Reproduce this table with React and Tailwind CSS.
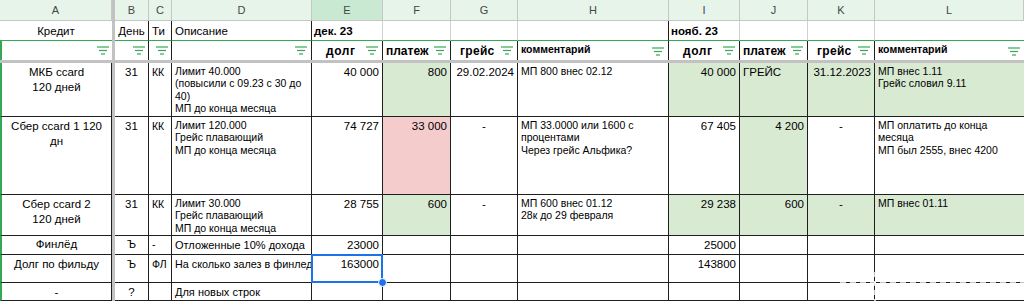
import React from "react";

const LINE = "border-[#1f1f1f]";
const GREEN = "bg-[#d9ead3]";
const PINK = "bg-[#f4cccc]";

const cols = ["A", "", "B", "C", "D", "E", "F", "G", "H", "I", "J", "K", "L"];

const FilterIcon = () => (
  <svg width="12" height="9" viewBox="0 0 12 9" className="shrink-0">
    <g stroke="#34a853" strokeWidth="1.2">
      <line x1="0" y1="1" x2="12" y2="1" />
      <line x1="2" y1="4.5" x2="10" y2="4.5" />
      <line x1="4" y1="8" x2="8" y2="8" />
    </g>
  </svg>
);

// one data cell; borders right + bottom
const Cell = ({ children, className = "" }) => (
  <div className={`border-r border-b ${LINE} px-[3px] overflow-hidden ${className}`}>{children}</div>
);

const FilterCell = ({ label, className = "", labelClass = "" }) => (
  <div className={`border-r ${LINE} flex items-center justify-between pl-[3px] pr-[4px] ${className}`}>
    <span className={`font-bold text-[12px] ${labelClass}`}>{label}</span>
    <FilterIcon />
  </div>
);

const Lines = ({ items }) => items.map((t, i) => <div key={i}>{t}</div>);

export default function App() {
  return (
    <div
      className="w-[1024px] h-[301px] overflow-hidden bg-white text-black relative"
      style={{ fontFamily: '"Liberation Sans", Arial, sans-serif' }}
    >
      <div className="grid grid-cols-[112px_3px_34px_23px_140px_71px_68px_67px_151px_71px_68px_67px_149px] grid-rows-[21px_20px_19px_3px_54px_78px_41px_19px_28px_18px] text-[11.5px] leading-[14px]">
        {/* frozen separators */}
        <div className="col-start-2 row-span-full bg-[#c2c2c2]" />
        <div className="row-start-4 col-span-full bg-[#c2c2c2]" />

        {/* column letters */}
        {cols.map((c, i) =>
          i === 1 ? null : (
            <div
              key={c}
              className={`flex items-center justify-center border-r border-b border-[#c4c7c5] text-[11px] text-[#444746] ${
                c === "E" ? "bg-[#c9e9d2]" : "bg-[#e6f4ea]"
              }`}
            >
              {c}
            </div>
          )
        )}

        {/* row 1 */}
        <div className="flex items-center justify-center border-b border-[#34a853]">Кредит</div>
        <div className={`flex items-center justify-center border-r border-b ${LINE} border-b-[#34a853]`}>День</div>
        <div className={`flex items-center pl-[3px] border-r border-b ${LINE} border-b-[#34a853]`}>Ти</div>
        <div className={`flex items-center pl-[3px] border-r border-b ${LINE} border-b-[#34a853]`}>Описание</div>
        <div className="flex items-center pl-[2px] font-bold border-r border-b border-[#d0d0d0] border-b-[#34a853]">дек. 23</div>
        <div className="border-r border-b border-[#d0d0d0] border-b-[#34a853]" />
        <div className="border-r border-b border-[#d0d0d0] border-b-[#34a853]" />
        <div className={`border-r border-b ${LINE} border-b-[#34a853]`} />
        <div className="flex items-center pl-[2px] font-bold border-r border-b border-[#d0d0d0] border-b-[#34a853]">нояб. 23</div>
        <div className="border-r border-b border-[#d0d0d0] border-b-[#34a853]" />
        <div className="border-r border-b border-[#d0d0d0] border-b-[#34a853]" />
        <div className="border-b border-[#34a853]" />

        {/* row 2: filters */}
        <div className="flex items-center justify-end pr-[3px] border-l-2 border-[#34a853]">
          <FilterIcon />
        </div>
        <div className={`flex items-center justify-end pr-[3px] border-r ${LINE}`}>
          <FilterIcon />
        </div>
        <div className={`flex items-center justify-end pr-[3px] border-r ${LINE}`}>
          <FilterIcon />
        </div>
        <div className={`flex items-center justify-end pr-[4px] border-r ${LINE}`}>
          <FilterIcon />
        </div>
        <FilterCell label="долг" className="pl-[14px]" labelClass="tracking-[0.6px]" />
        <FilterCell label="платеж" />
        <FilterCell label="грейс" className="pl-[9px]" labelClass="tracking-[0.3px]" />
        <div className={`border-r ${LINE} flex items-start justify-between pl-[3px] pr-[4px] pt-[1px]`}>
          <span className="font-bold text-[10.5px]">комментарий</span>
          <span className="mt-[5px]">
            <FilterIcon />
          </span>
        </div>
        <FilterCell label="долг" className="pl-[14px]" labelClass="tracking-[0.6px]" />
        <FilterCell label="платеж" />
        <FilterCell label="грейс" className="pl-[9px]" labelClass="tracking-[0.3px]" />
        <div className="flex items-start justify-between pl-[3px] pr-[4px] pt-[1px]">
          <span className="font-bold text-[10.5px]">комментарий</span>
          <span className="mt-[5px]">
            <FilterIcon />
          </span>
        </div>

        {/* row 3: МКБ */}
        <Cell className="border-l-2 border-l-[#34a853] text-center pt-[2px] leading-[15px]">
          <Lines items={["МКБ ccard", "120 дней"]} />
        </Cell>
        <Cell className="text-center pt-[2px]">31</Cell>
        <Cell className="pt-[2px] text-[10.5px]">КК</Cell>
        <Cell className="pt-[2px] text-[10.5px] leading-[12.3px]">
          <Lines items={["Лимит 40.000", "(повысили с 09.23 с 30 до 40)", "МП до конца месяца"]} />
        </Cell>
        <Cell className="text-right pt-[2px]">40 000</Cell>
        <Cell className={`text-right pt-[2px] ${GREEN}`}>800</Cell>
        <Cell className="text-right pt-[2px]">29.02.2024</Cell>
        <Cell className="pt-[2px] text-[10.5px] leading-[12.3px]">МП 800 внес 02.12</Cell>
        <Cell className={`text-right pt-[2px] ${GREEN}`}>40 000</Cell>
        <Cell className={`pt-[2px] ${GREEN}`}>ГРЕЙС</Cell>
        <Cell className={`text-right pt-[2px] ${GREEN}`}>31.12.2023</Cell>
        <Cell className={`border-r-0 pt-[2px] text-[10.5px] leading-[12.3px] ${GREEN}`}>
          <Lines items={["МП внес 1.11", "Грейс словил 9.11"]} />
        </Cell>

        {/* row 4: Сбер 1 */}
        <Cell className="border-l-2 border-l-[#34a853] text-center pt-[2px] leading-[15px]">
          <Lines items={["Сбер ccard 1 120", "дн"]} />
        </Cell>
        <Cell className="text-center pt-[2px]">31</Cell>
        <Cell className="pt-[2px] text-[10.5px]">КК</Cell>
        <Cell className="pt-[2px] text-[10.5px] leading-[12.3px]">
          <Lines items={["Лимит 120.000", "Грейс плавающий", "МП до конца месяца"]} />
        </Cell>
        <Cell className="text-right pt-[2px]">74 727</Cell>
        <Cell className={`text-right pt-[2px] ${PINK}`}>33 000</Cell>
        <Cell className="text-center pt-[2px]">-</Cell>
        <Cell className="pt-[2px] text-[10.5px] leading-[12.3px]">
          <Lines items={["МП 33.0000 или 1600 с процентами", "Через грейс Альфика?"]} />
        </Cell>
        <Cell className="text-right pt-[2px]">67 405</Cell>
        <Cell className={`text-right pt-[2px] ${GREEN}`}>4 200</Cell>
        <Cell className="text-center pt-[2px]">-</Cell>
        <Cell className="border-r-0 pt-[2px] text-[10.5px] leading-[12.3px]">
          <Lines items={["МП оплатить до конца месяца", "МП был 2555, внес 4200"]} />
        </Cell>

        {/* row 5: Сбер 2 */}
        <Cell className="border-l-2 border-l-[#34a853] text-center pt-[2px] leading-[15px]">
          <Lines items={["Сбер ccard 2", "120 дней"]} />
        </Cell>
        <Cell className="text-center pt-[2px]">31</Cell>
        <Cell className="pt-[2px] text-[10.5px]">КК</Cell>
        <Cell className="pt-[2px] text-[10.5px] leading-[12.3px]">
          <Lines items={["Лимит 30.000", "Грейс плавающий", "МП до конца месяца"]} />
        </Cell>
        <Cell className="text-right pt-[2px]">28 755</Cell>
        <Cell className={`text-right pt-[2px] ${GREEN}`}>600</Cell>
        <Cell className="text-center pt-[2px]">-</Cell>
        <Cell className="pt-[2px] text-[10.5px] leading-[12.3px]">
          <Lines items={["МП 600 внес 01.12", "28к до 29 февраля"]} />
        </Cell>
        <Cell className={`text-right pt-[2px] ${GREEN}`}>29 238</Cell>
        <Cell className={`text-right pt-[2px] ${GREEN}`}>600</Cell>
        <Cell className={`text-center pt-[2px] ${GREEN}`}>-</Cell>
        <Cell className={`border-r-0 pt-[2px] text-[10.5px] leading-[12.3px] ${GREEN}`}>МП внес 01.11</Cell>

        {/* row 6: Финлёд */}
        <Cell className="border-l-2 border-l-[#34a853] text-center pt-[1px]">Финлёд</Cell>
        <Cell className="text-center pt-[1px]">Ъ</Cell>
        <Cell className="pt-[1px] text-[10.5px]">-</Cell>
        <Cell className="pt-[2px] text-[11px] whitespace-nowrap">Отложенные 10% дохода</Cell>
        <Cell className="text-right pt-[2px]">23000</Cell>
        <Cell />
        <Cell />
        <Cell />
        <Cell className="text-right pt-[2px]">25000</Cell>
        <Cell />
        <Cell />
        <Cell className="border-r-0" />

        {/* row 7: Долг по фильду */}
        <Cell className="border-l-2 border-l-[#34a853] text-center pt-[2px]">Долг по фильду</Cell>
        <Cell className="text-center pt-[2px]">Ъ</Cell>
        <Cell className="pt-[2px] text-[10.5px]">ФЛ</Cell>
        <Cell className="pt-[2px] text-[10.8px] whitespace-nowrap">На сколько залез в финлед</Cell>
        <Cell className="relative overflow-visible text-right pt-[2px]">
          163000
          <div className="absolute -left-px -top-px -right-px -bottom-px border-2 border-[#1a73e8]" />
          <div className="absolute -right-[5px] -bottom-[5px] w-[9px] h-[9px] rounded-full bg-[#1a73e8] border border-white z-10" />
        </Cell>
        <Cell />
        <Cell />
        <Cell />
        <Cell className="text-right pt-[2px]">143800</Cell>
        <Cell />
        <Cell />
        <Cell className="border-r-0" />

        {/* row 8 */}
        <Cell className="border-l-2 border-l-[#34a853] text-center pt-[2px]">-</Cell>
        <Cell className="text-center pt-[2px]">?</Cell>
        <Cell />
        <Cell className="pt-[2px] text-[11px]">Для новых строк</Cell>
        <Cell />
        <Cell />
        <Cell />
        <Cell />
        <Cell />
        <Cell />
        <Cell />
        <Cell className="border-r-0" />
      </div>

      {/* marching-ants remnant near bottom right */}
      <svg className="absolute left-[840px] top-[272px]" width="184" height="29">
        <line x1="0" y1="11" x2="184" y2="11" stroke="#fff" strokeWidth="1.5" strokeDasharray="6 4" />
        <line x1="35" y1="0" x2="35" y2="29" stroke="#fff" strokeWidth="1.5" strokeDasharray="5 4" />
      </svg>
    </div>
  );
}
